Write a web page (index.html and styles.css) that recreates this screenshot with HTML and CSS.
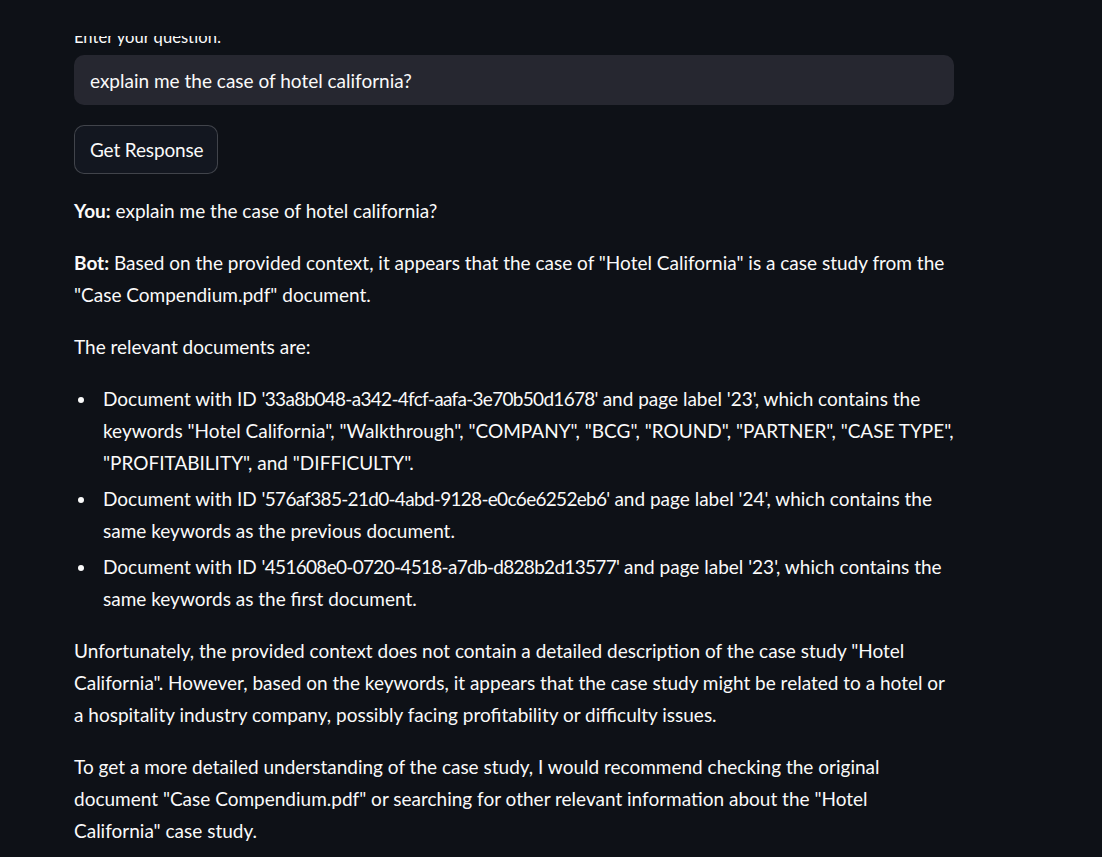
FILE: index.html
```html
<!DOCTYPE html>
<html lang="en">
<head>
<meta charset="utf-8">
<title>Chat</title>
<link rel="stylesheet" href="styles.css">
</head>
<body>
<header class="app-header"></header>
<main class="main">
  <div class="block">
    <label class="field-label" for="q">Enter your question:</label>
    <div class="input-box"><input id="q" class="input" type="text" value="explain me the case of hotel california?"></div>
    <button class="btn" type="button">Get Response</button>
    <div class="md">
      <p><strong>You:</strong> explain me the case of hotel california?</p>
      <p><strong>Bot:</strong> Based on the provided context, it appears that the case of "Hotel California" is a case study from the "Case Compendium.pdf" document.</p>
      <p>The relevant documents are:</p>
      <ul>
        <li>Document with ID <span class="id">'33a8b048-a342-4fcf-aafa-3e70b50d1678'</span> and page label '23', which contains the keywords "Hotel California", "Walkthrough", "COMPANY", "BCG", "ROUND", "PARTNER", "CASE TYPE", "PROFITABILITY", and "DIFFICULTY".</li>
        <li>Document with ID <span class="id">'576af385-21d0-4abd-9128-e0c6e6252eb6'</span> and page label '24', which contains the same keywords as the previous document.</li>
        <li>Document with ID <span class="id">'451608e0-0720-4518-a7db-d828b2d13577'</span> and page label '23', which contains the same keywords as the first document.</li>
      </ul>
      <p>Unfortunately, the provided context does not contain a detailed description of the case study "Hotel California". However, based on the keywords, it appears that the case study might be related to a hotel or a hospitality industry company, possibly facing profitability or difficulty issues.</p>
      <p>To get a more detailed understanding of the case study, I would recommend checking the original document "Case Compendium.pdf" or searching for other relevant information about the "Hotel California" case study.</p>
    </div>
  </div>
</main>
</body>
</html>
```
FILE: styles.css
```css
html, body {
  margin: 0;
  padding: 0;
  background: #0e1117;
  color: #fafafa;
  font-family: "Lato", sans-serif;
}
.app-header {
  position: fixed;
  top: 0;
  left: 0;
  right: 0;
  height: 36px;
  background: #0e1117;
  z-index: 10;
}
.main {
  padding: 27px 0 0 74px;
  width: 880px;
  height: 830px;
  overflow: hidden;
}
.field-label {
  display: block;
  font-size: 16.6px;
  line-height: 20px;
  height: 20px;
  margin-bottom: 8px;
}
.input-box {
  background: #262730;
  border-radius: 10px;
  height: 50px;
  display: flex;
  align-items: center;
}
.input {
  background: transparent;
  border: 0;
  outline: none;
  color: #fafafa;
  font: inherit;
  font-size: 19px;
  padding: 0 16px;
  width: 100%;
}
.btn {
  display: block;
  margin-top: 20px;
  height: 49px;
  padding: 0 14px 0 15px;
  background: #131720;
  border: 1px solid rgba(250, 250, 250, 0.2);
  border-radius: 10px;
  color: #fafafa;
  font: inherit;
  font-size: 19px;
  letter-spacing: -0.15px;
}
.md {
  margin-top: 21px;
  font-size: 19px;
  line-height: 32px;
}
.md p {
  margin: 0 0 20px;
}
.md strong {
  font-weight: 700;
}
.md .id {
  letter-spacing: -0.7px;
}
.md ul {
  list-style: none;
  margin: 0 0 20px;
  padding: 0;
}
.md li {
  position: relative;
  padding-left: 29px;
  margin: 4px 0 0;
}
.md li:first-child {
  margin-top: 0;
}
.md li::before {
  content: "";
  position: absolute;
  left: 4px;
  top: 14px;
  width: 6px;
  height: 6px;
  border-radius: 50%;
  background: #fafafa;
}
```
